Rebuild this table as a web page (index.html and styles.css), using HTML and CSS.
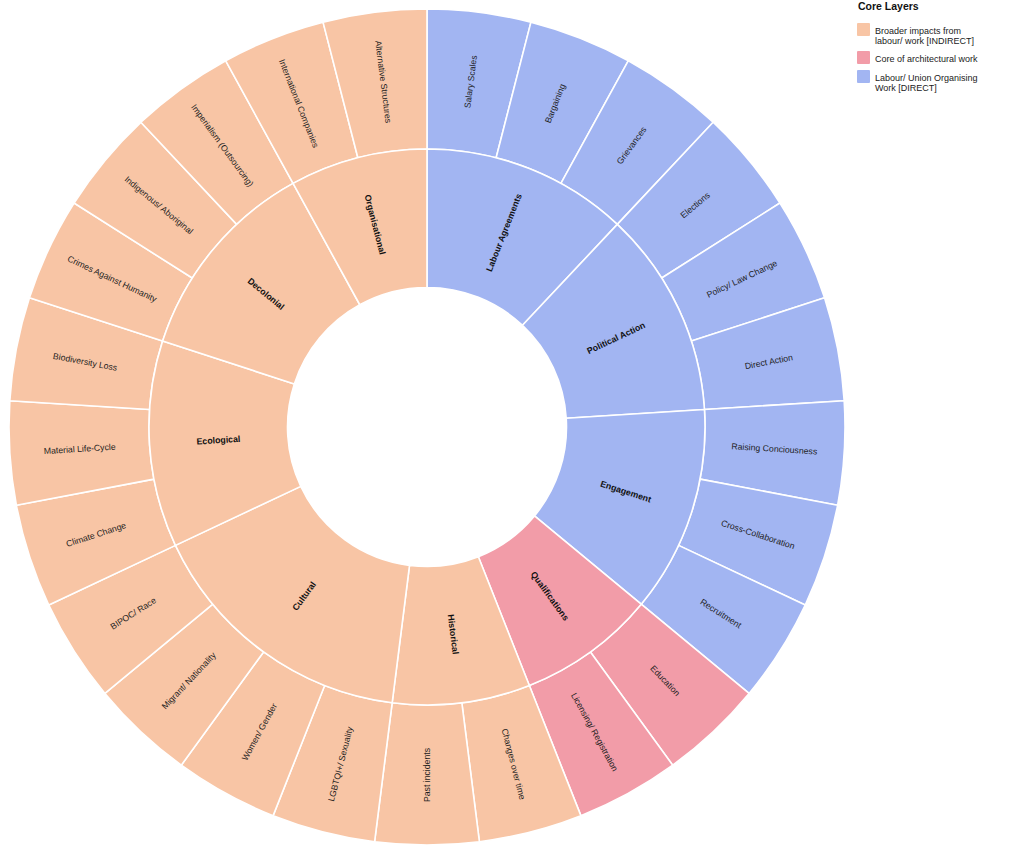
FILE: index.html
```html
<!DOCTYPE html>
<html lang="en">
<head>
<meta charset="utf-8">
<title>Core Layers</title>
<link rel="stylesheet" href="styles.css">
</head>
<body>
<div class="page">
  <svg class="chart" width="857" height="853" viewBox="0 0 857 853" xmlns="http://www.w3.org/2000/svg">
    <defs>
      <path id="leaf" d="M0,-418 A418,418 0 0 1 103.95,-404.87 L69.14,-269.27 A278,278 0 0 0 0,-278 Z"/>
      <path id="w2" d="M0,-278 A278,278 0 0 1 133.93,-243.61 L67.20,-122.25 A139.5,139.5 0 0 0 0,-139.5 Z"/>
      <path id="w3" d="M0,-278 A278,278 0 0 1 190.30,-202.65 L95.49,-101.69 A139.5,139.5 0 0 0 0,-139.5 Z"/>
      <path id="w4" d="M0,-278 A278,278 0 0 1 234.72,-148.96 L117.78,-74.75 A139.5,139.5 0 0 0 0,-139.5 Z"/>
    </defs>
    <g transform="translate(427,427)">
      <g class="seg">
        <use href="#leaf" class="b" transform="rotate(0)"/>
        <use href="#leaf" class="b" transform="rotate(14.4)"/>
        <use href="#leaf" class="b" transform="rotate(28.8)"/>
        <use href="#leaf" class="b" transform="rotate(43.2)"/>
        <use href="#leaf" class="b" transform="rotate(57.6)"/>
        <use href="#leaf" class="b" transform="rotate(72)"/>
        <use href="#leaf" class="b" transform="rotate(86.4)"/>
        <use href="#leaf" class="b" transform="rotate(100.8)"/>
        <use href="#leaf" class="b" transform="rotate(115.2)"/>
        <use href="#leaf" class="p" transform="rotate(129.6)"/>
        <use href="#leaf" class="p" transform="rotate(144)"/>
        <use href="#leaf" class="o" transform="rotate(158.4)"/>
        <use href="#leaf" class="o" transform="rotate(172.8)"/>
        <use href="#leaf" class="o" transform="rotate(187.2)"/>
        <use href="#leaf" class="o" transform="rotate(201.6)"/>
        <use href="#leaf" class="o" transform="rotate(216)"/>
        <use href="#leaf" class="o" transform="rotate(230.4)"/>
        <use href="#leaf" class="o" transform="rotate(244.8)"/>
        <use href="#leaf" class="o" transform="rotate(259.2)"/>
        <use href="#leaf" class="o" transform="rotate(273.6)"/>
        <use href="#leaf" class="o" transform="rotate(288)"/>
        <use href="#leaf" class="o" transform="rotate(302.4)"/>
        <use href="#leaf" class="o" transform="rotate(316.8)"/>
        <use href="#leaf" class="o" transform="rotate(331.2)"/>
        <use href="#leaf" class="o" transform="rotate(345.6)"/>

        <use href="#w3" class="b" transform="rotate(0)"/>
        <use href="#w3" class="b" transform="rotate(43.2)"/>
        <use href="#w3" class="b" transform="rotate(86.4)"/>
        <use href="#w2" class="p" transform="rotate(129.6)"/>
        <use href="#w2" class="o" transform="rotate(158.4)"/>
        <use href="#w4" class="o" transform="rotate(187.2)"/>
        <use href="#w3" class="o" transform="rotate(244.8)"/>
        <use href="#w3" class="o" transform="rotate(288)"/>
        <use href="#w2" class="o" transform="rotate(331.2)"/>
      </g>

      <g class="leaf-labels">
        <text transform="rotate(7.2) translate(0,-348) rotate(-90)">Salary Scales</text>
        <text transform="rotate(21.6) translate(0,-348) rotate(-90)">Bargaining</text>
        <text transform="rotate(36) translate(0,-348) rotate(-90)">Grievances</text>
        <text transform="rotate(50.4) translate(0,-348) rotate(-90)">Elections</text>
        <text transform="rotate(64.8) translate(0,-348) rotate(-90)">Policy/ Law Change</text>
        <text transform="rotate(79.2) translate(0,-348) rotate(-90)">Direct Action</text>
        <text transform="rotate(93.6) translate(0,-348) rotate(-90)">Raising Conciousness</text>
        <text transform="rotate(108) translate(0,-348) rotate(-90)">Cross-Collaboration</text>
        <text transform="rotate(122.4) translate(0,-348) rotate(-90)">Recruitment</text>
        <text transform="rotate(136.8) translate(0,-348) rotate(-90)">Education</text>
        <text transform="rotate(151.2) translate(0,-348) rotate(-90)">Licensing/ Registration</text>
        <text transform="rotate(165.6) translate(0,-348) rotate(-90)">Changes over time</text>
        <text transform="rotate(180) translate(0,-348) rotate(90)">Past incidents</text>
        <text transform="rotate(194.4) translate(0,-348) rotate(90)">LGBTQI+/ Sexuality</text>
        <text transform="rotate(208.8) translate(0,-348) rotate(90)">Women/ Gender</text>
        <text transform="rotate(223.2) translate(0,-348) rotate(90)">Migrant/ Nationality</text>
        <text transform="rotate(237.6) translate(0,-348) rotate(90)">BIPOC/ Race</text>
        <text transform="rotate(252) translate(0,-348) rotate(90)">Climate Change</text>
        <text transform="rotate(266.4) translate(0,-348) rotate(90)">Material Life-Cycle</text>
        <text transform="rotate(280.8) translate(0,-348) rotate(90)">Biodiversity Loss</text>
        <text transform="rotate(295.2) translate(0,-348) rotate(90)">Crimes Against Humanity</text>
        <text transform="rotate(309.6) translate(0,-348) rotate(90)">Indigenous/ Aboriginal</text>
        <text transform="rotate(324) translate(0,-348) rotate(90)">Imperialism (Outsourcing)</text>
        <text transform="rotate(338.4) translate(0,-348) rotate(90)">International Companies</text>
        <text transform="rotate(352.8) translate(0,-348) rotate(90)">Alternative Structures</text>
      </g>

      <g class="group-labels">
        <text transform="rotate(21.6) translate(0,-209) rotate(-90)">Labour Agreements</text>
        <text transform="rotate(64.8) translate(0,-209) rotate(-90)">Political Action</text>
        <text transform="rotate(108) translate(0,-209) rotate(-90)">Engagement</text>
        <text transform="rotate(144) translate(0,-209) rotate(-90)">Qualifications</text>
        <text transform="rotate(172.8) translate(0,-209) rotate(-90)">Historical</text>
        <text transform="rotate(216) translate(0,-209) rotate(90)">Cultural</text>
        <text transform="rotate(266.4) translate(0,-209) rotate(90)">Ecological</text>
        <text transform="rotate(309.6) translate(0,-209) rotate(90)">Decolonial</text>
        <text transform="rotate(345.6) translate(0,-209) rotate(90)">Organisational</text>
      </g>
    </g>
  </svg>

  <aside class="legend">
    <div class="legend-title">Core Layers</div>
    <ul class="legend-list">
      <li class="legend-item"><span class="swatch swatch-o"></span><span class="legend-text">Broader impacts from labour/ work [INDIRECT]</span></li>
      <li class="legend-item"><span class="swatch swatch-p"></span><span class="legend-text">Core of architectural work</span></li>
      <li class="legend-item"><span class="swatch swatch-b"></span><span class="legend-text">Labour/ Union Organising Work [DIRECT]</span></li>
    </ul>
  </aside>
</div>
</body>
</html>
```

FILE: styles.css
```css
html, body {
  margin: 0;
  padding: 0;
  background: #ffffff;
}

body {
  font-family: "Liberation Sans", Arial, sans-serif;
  color: #222;
}

.page {
  display: flex;
  align-items: flex-start;
  width: 1024px;
  height: 853px;
  overflow: hidden;
}

.chart {
  display: block;
  flex: 0 0 857px;
}

.seg use {
  stroke: #ffffff;
  stroke-width: 1.6;
  stroke-linejoin: round;
}

.o { fill: #f8c5a5; }
.p { fill: #f29ca8; }
.b { fill: #a2b5f2; }

.leaf-labels text,
.group-labels text {
  font-family: "Liberation Sans", Arial, sans-serif;
  text-anchor: middle;
  dominant-baseline: central;
}

.leaf-labels text {
  font-size: 8.7px;
  fill: #1e1e1e;
}

.group-labels text {
  font-size: 8.8px;
  font-weight: bold;
  fill: #111111;
}

.legend {
  flex: 0 0 auto;
  width: 130px;
  padding-top: 0;
}

.legend-title {
  font-size: 10.5px;
  font-weight: bold;
  line-height: 13px;
  color: #111;
  margin-left: 1px;
}

.legend-list {
  list-style: none;
  margin: 12.5px 0 0 0;
  padding: 0;
  display: flex;
  flex-direction: column;
  gap: 8.5px;
}

.legend-item {
  display: flex;
  align-items: flex-start;
  gap: 5px;
}

.swatch {
  flex: 0 0 13px;
  width: 13px;
  height: 13px;
  margin-top: -3px;
  border-radius: 1px;
}

.swatch-o { background: #f8c5a5; }
.swatch-p { background: #f29ca8; }
.swatch-b { background: #a2b5f2; }

.legend-text {
  width: 108px;
  font-size: 9px;
  line-height: 10px;
  color: #222;
}
```
